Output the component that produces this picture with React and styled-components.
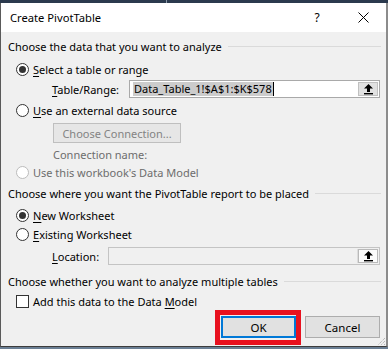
import React from "react";
import styled, { createGlobalStyle } from "styled-components";

const Global = createGlobalStyle`
  html, body { margin: 0; padding: 0; background: #6b7f94; }
  body { font-family: "Noto Sans", "Segoe UI", sans-serif; }
  * { box-sizing: border-box; }
`;

const Frame = styled.div`
  width: 388px;
  height: 349px;
  display: flex;
  flex-direction: column;
  background: #6b7f94;
  font-family: "Noto Sans", sans-serif;
  font-size: 11px;
  color: #000;
`;

const TopStrip = styled.div`
  height: 3px;
  display: flex;
  background: #2b3a4e;
`;

const StripPane = styled.div`
  width: ${(p) => p.$w}px;
  border-right: 1px solid #8a98a8;
`;

const Dialog = styled.div`
  flex: 1;
  display: flex;
  flex-direction: column;
  border-left: 1px solid #5a5a5a;
  border-right: 2px solid #8c8c8c;
  border-bottom: 1px solid #3c3c3c;
  margin-bottom: 2px;
`;

const TitleBar = styled.div`
  height: 29px;
  background: #fff;
  display: flex;
  align-items: center;
  padding: 0 0 0 9px;
  font-size: 11.2px;
`;

const Title = styled.span`
  flex: 1;
`;

const TitleIcon = styled.span`
  width: 46px;
  display: flex;
  justify-content: center;
  align-items: center;
  font-size: 12px;
`;

const Body = styled.div`
  flex: 1;
  background: #f0f0f0;
  padding: 6px 5px 0 7px;
  display: flex;
  flex-direction: column;
  position: relative;
`;

const Header = styled.div`
  height: 16px;
  display: flex;
  align-items: center;
  gap: 6px;
  margin-top: ${(p) => p.$mt || 0}px;
  white-space: nowrap;
`;

const Rule = styled.div`
  flex: 1;
  height: 1px;
  background: #dadada;
  margin-top: 1px;
`;

const Row = styled.div`
  height: ${(p) => p.$h || 18}px;
  display: flex;
  align-items: center;
  margin-top: ${(p) => p.$mt || 0}px;
  padding-left: ${(p) => p.$indent || 0}px;
  color: ${(p) => (p.$disabled ? "#6d6d6d" : "#000")};
  white-space: nowrap;
`;

const RadioCircle = styled.span`
  width: 13px;
  height: 13px;
  border-radius: 50%;
  border: 1px solid ${(p) => (p.$disabled ? "#bcbcbc" : "#333")};
  background: #fff;
  display: flex;
  align-items: center;
  justify-content: center;
  margin-right: 4px;
  flex: none;
  &::after {
    content: "";
    width: 7px;
    height: 7px;
    border-radius: 50%;
    background: ${(p) => (p.$checked ? "#333" : "transparent")};
  }
`;

const CheckBox = styled.span`
  width: 13px;
  height: 13px;
  border: 1px solid #333;
  background: #fff;
  margin-right: 4px;
  flex: none;
`;

const Key = styled.span`
  text-decoration: underline;
  text-underline-offset: 2px;
`;

const Label = styled.span`
  width: ${(p) => p.$w}px;
  flex: none;
`;

const Field = styled.div`
  flex: 1;
  height: 18px;
  display: flex;
  border: 1px solid ${(p) => (p.$disabled ? "#c4c4c4" : "#a9a9a9")};
  background: ${(p) => (p.$disabled ? "#f0f0f0" : "#fff")};
  padding: 1px;
  margin-right: 1px;
`;

const FieldText = styled.div`
  flex: 1;
  display: flex;
  align-items: center;
  padding-left: 2px;
  border-right: 1px solid ${(p) => (p.$disabled ? "#dcdcdc" : "#fff")};
`;

const Selected = styled.span`
  background: #cccccc;
  line-height: 14px;
  padding: 0 1px;
  border-right: 1px solid #000;
`;

const RefButton = styled.div`
  width: 20px;
  display: flex;
  align-items: center;
  justify-content: center;
  background: ${(p) => (p.$disabled ? "#fbfbfb" : "#e1e1e1")};
  border: 1px solid ${(p) => (p.$disabled ? "#b9b9b9" : "#c0c0c0")};
`;

const DisabledButton = styled.div`
  width: 128px;
  height: 20px;
  margin-top: 4px;
  margin-left: 45px;
  border: 1px solid #bfbfbf;
  background: #e6e6e6;
  color: #838383;
  display: flex;
  align-items: center;
  justify-content: center;
`;

const Footer = styled.div`
  display: flex;
  justify-content: flex-end;
  gap: 9px;
  margin-top: 6px;
  padding-right: 1px;
`;

const ButtonWrap = styled.div`
  position: relative;
`;

const Highlight = styled.div`
  position: absolute;
  left: -6px;
  top: -6px;
  right: -5px;
  bottom: -7px;
  border: 5px solid #e8111f;
  pointer-events: none;
`;

const Button = styled.div`
  width: 75px;
  height: 22px;
  display: flex;
  align-items: center;
  justify-content: center;
  background: #e1e1e1;
  border: ${(p) => (p.$default ? "2px solid #0078d7" : "1px solid #adadad")};
  font-size: 11.5px;
`;

const Grip = styled.svg`
  position: absolute;
  right: 0;
  bottom: 0;
`;

const UpArrow = () => (
  <svg width="11" height="12" viewBox="0 0 11 12">
    <path d="M5.5 1 L10 5.5 L7 5.5 L7 9 L4 9 L4 5.5 L1 5.5 Z" fill="#000" />
    <rect x="1" y="10" width="9" height="1.4" fill="#000" />
  </svg>
);

export default function App() {
  return (
    <>
      <Global />
      <Frame>
        <TopStrip>
          <StripPane $w={167} />
        </TopStrip>
        <Dialog>
          <TitleBar>
            <Title>Create PivotTable</Title>
            <TitleIcon>?</TitleIcon>
            <TitleIcon>
              <svg width="11" height="11" viewBox="0 0 11 11">
                <path d="M0.5 0.5 L10.5 10.5 M10.5 0.5 L0.5 10.5" stroke="#000" strokeWidth="1" />
              </svg>
            </TitleIcon>
          </TitleBar>
          <Body>
            <Header>
              Choose the data that you want to analyze
              <Rule />
            </Header>
            <Row $mt={6} $indent={8}>
              <RadioCircle $checked />
              <span>
                <Key>S</Key>elect a table or range
              </span>
            </Row>
            <Row $mt={2} $indent={44}>
              <Label $w={77}>
                <Key>T</Key>able/Range:
              </Label>
              <Field>
                <FieldText>
                  <Selected>Data_Table_1!$A$1:$K$578</Selected>
                </FieldText>
                <RefButton>
                  <UpArrow />
                </RefButton>
              </Field>
            </Row>
            <Row $mt={3} $indent={8}>
              <RadioCircle />
              <span>
                <Key>U</Key>se an external data source
              </span>
            </Row>
            <DisabledButton>Choose Connection...</DisabledButton>
            <Row $mt={3} $h={16} $indent={45} $disabled>
              Connection name:
            </Row>
            <Row $mt={1} $indent={8} $disabled>
              <RadioCircle $disabled />
              <span>Use this workbook's Data Model</span>
            </Row>
            <Header $mt={4}>
              Choose where you want the PivotTable report to be placed
              <Rule />
            </Header>
            <Row $mt={5} $indent={8}>
              <RadioCircle $checked />
              <span>
                <Key>N</Key>ew Worksheet
              </span>
            </Row>
            <Row $mt={1} $indent={8}>
              <RadioCircle />
              <span>
                <Key>E</Key>xisting Worksheet
              </span>
            </Row>
            <Row $mt={4} $indent={44}>
              <Label $w={56}>
                <Key>L</Key>ocation:
              </Label>
              <Field $disabled>
                <FieldText $disabled />
                <RefButton $disabled>
                  <UpArrow />
                </RefButton>
              </Field>
            </Row>
            <Header $mt={8}>
              Choose whether you want to analyze multiple tables
              <Rule />
            </Header>
            <Row $mt={3} $indent={8}>
              <CheckBox />
              <span>
                Add this data to the Data <Key>M</Key>odel
              </span>
            </Row>
            <Footer>
              <ButtonWrap>
                <Button $default>OK</Button>
                <Highlight />
              </ButtonWrap>
              <Button>Cancel</Button>
            </Footer>
            <Grip width="10" height="10" viewBox="0 0 10 10">
              <path d="M9 2 L2 9 M9 5 L5 9 M9 8 L8 9" stroke="#a0a0a0" strokeWidth="1" strokeDasharray="1 1" />
            </Grip>
          </Body>
        </Dialog>
      </Frame>
    </>
  );
}
